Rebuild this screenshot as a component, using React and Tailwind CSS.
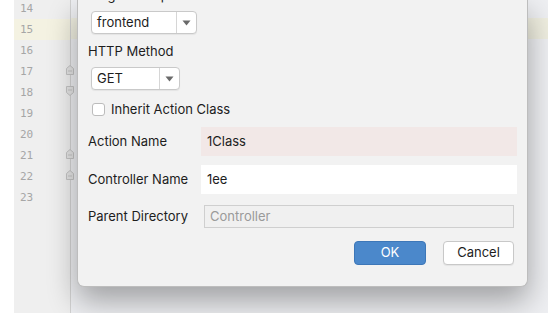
import React from 'react';

// line numbers shown in the editor gutter behind the dialog
const lines = [14, 15, 16, 17, 18, 19, 20, 21, 22, 23];

const FoldMarker = ({ top, down }) => (
  <svg
    className="absolute left-[65px]"
    style={{ top }}
    width="10"
    height="12"
    viewBox="0 0 10 12"
  >
    {down ? (
      <path d="M1.5 1.5h7v6l-3.5 3-3.5-3z M3 5h4" fill="#e4e4e4" stroke="#c4c4c4" strokeWidth="1" />
    ) : (
      <path d="M1.5 10.5h7v-6l-3.5-3-3.5 3z M3 7h4" fill="#e4e4e4" stroke="#c4c4c4" strokeWidth="1" />
    )}
  </svg>
);

const Select = ({ value, width, split }) => (
  <div
    className="flex h-[23px] items-stretch rounded-[4px] border border-[#c9c9c9] bg-white shadow-[0_1px_1px_rgba(0,0,0,0.06)]"
    style={{ width }}
  >
    <div className="flex items-center pl-[5px] text-[13px] text-[#1d1d1d]" style={{ width: split }}>
      {value}
    </div>
    <div className="flex flex-1 items-center justify-center border-l border-[#d6d6d6]">
      <svg width="9" height="6" viewBox="0 0 9 6">
        <path d="M0.5 0.5h8l-4 5z" fill="#6a6a6a" />
      </svg>
    </div>
  </div>
);

export default function App() {
  return (
    <div
      className="relative h-[313px] w-[548px] overflow-hidden bg-white"
      style={{ fontFamily: 'Inter, "Noto Sans", sans-serif' }}
    >
      {/* editor */}
      <div className="flex h-full">
        <div className="w-[14px] bg-white" />
        <div className="relative w-[57px] border-r border-[#d2d2d2] bg-[#efefef]">
          <div className="-mt-[2px] flex flex-col">
            {lines.map((n) => (
              <div
                key={n}
                className={`flex h-[21px] items-center pl-[6px] pt-[2px] text-[11px] text-[#a6a6a6] ${n === 15 ? 'bg-[#f4f2e2]' : ''}`}
                style={{ fontFamily: '"DejaVu Sans Mono", monospace' }}
              >
                {n}
              </div>
            ))}
          </div>
        </div>
        <div className="flex-1 bg-[#eeeff2]">
          <div className="mt-[18px] h-[21px] bg-[#efeee0]" />
        </div>
      </div>

      <FoldMarker top={64} />
      <FoldMarker top={85} down />
      <FoldMarker top={148} />
      <FoldMarker top={169} />

      {/* dialog */}
      <div className="absolute left-[77px] top-0 flex h-[287px] w-[451px] flex-col rounded-b-[7px] border border-t-0 border-[#bdbdbd] bg-[#f2f2f2] pl-[10px] pr-[10px] text-[13px] text-[#1d1d1d] shadow-[0_14px_30px_rgba(0,0,0,0.33)]">
        <div className="-mt-[13px] h-[16px] leading-[16px]">Target Group</div>
        <div className="ml-[3px] mt-[8px]">
          <Select value="frontend" width={106} split={84} />
        </div>
        <div className="mt-[9px] h-[16px] leading-[16px]">HTTP Method</div>
        <div className="ml-[3px] mt-[8px]">
          <Select value="GET" width={89} split={67} />
        </div>
        <label className="ml-[4px] mt-[12px] flex h-[15px] items-center gap-[6px]">
          <span className="h-[13px] w-[13px] rounded-[3px] border border-[#bcbcbc] bg-white" />
          <span>Inherit Action Class</span>
        </label>

        <div className="mt-[10px] flex h-[29px] items-center">
          <div className="w-[113px]">Action Name</div>
          <div className="flex h-full flex-1 items-center bg-[#f2e8e7] pl-[6px]">1Class</div>
        </div>
        <div className="mt-[9px] flex h-[29px] items-center">
          <div className="w-[113px]">Controller Name</div>
          <div className="flex h-full flex-1 items-center bg-white pl-[6px]">1ee</div>
        </div>
        <div className="mt-[8px] flex h-[29px] items-center">
          <div className="w-[113px]">Parent Directory</div>
          <div className="mx-[3px] flex h-[23px] flex-1 items-center border border-[#cfcfcf] bg-[#f0f0f0] pl-[5px] text-[#9a9a9a]">
            Controller
          </div>
        </div>

        <div className="mr-[3px] mt-[10px] flex justify-end gap-[17px]">
          <button className="h-[24px] w-[72px] rounded-[4px] border border-[#3d77b8] bg-[#4b88cb] text-[13px] text-white">
            OK
          </button>
          <button className="h-[24px] w-[71px] rounded-[4px] border border-[#c8c8c8] bg-white text-[13px] text-[#1d1d1d] shadow-[0_1px_1px_rgba(0,0,0,0.06)]">
            Cancel
          </button>
        </div>
      </div>
    </div>
  );
}
